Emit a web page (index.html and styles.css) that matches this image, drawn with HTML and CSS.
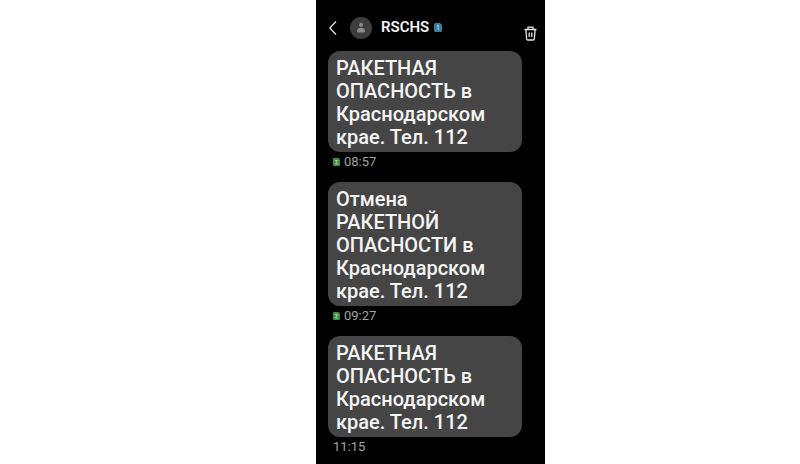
FILE: index.html
```html
<!DOCTYPE html>
<html lang="ru">
<head>
<meta charset="utf-8">
<meta name="viewport" content="width=device-width, initial-scale=1">
<title>RSCHS</title>
<link rel="stylesheet" href="styles.css">
</head>
<body>
<main class="phone">
  <header class="bar">
    <button class="icon-button" type="button" aria-label="Назад">
      <svg width="10" height="16" viewBox="0 0 10 16" fill="none" stroke="#e4e4e4" stroke-width="1.3"><path d="M8 1.500 1.800 8 8 14.500"/></svg>
    </button>
    <svg class="avatar" width="22" height="22" viewBox="0 0 22 22"><circle cx="11" cy="11" r="11" fill="#3e3e3e"/><circle cx="11" cy="7.800" r="2" fill="#8b8b8b"/><path d="M7 14.200c0-2.400 1.600-3.400 4-3.400s4 1 4 3.400c0 .8-.4 1.200-1.200 1.200H8.200c-.8 0-1.200-.4-1.200-1.200z" fill="#8b8b8b"/></svg>
    <h1 class="name">RSCHS</h1>
    <svg class="sim" width="8" height="9" viewBox="0 0 8 9"><path d="M1.500 0H6l2 2v5.500A1.500 1.500 0 0 1 6.500 9h-5A1.500 1.500 0 0 1 0 7.500v-6A1.500 1.500 0 0 1 1.500 0z" fill="#397d9f"/><path d="M3 3l1.200-.8V7" fill="none" stroke="#b5dceb"/></svg>
    <button class="icon-button trash" type="button" aria-label="Удалить">
      <svg width="13" height="15" viewBox="0 0 13 15" fill="none" stroke="#e8e8e8" stroke-width="1.3"><path d="M.5 3.500h12M4 3.300V1.200h5v2.100M1.900 3.500l.7 9.200c.1.900.5 1.300 1.300 1.300h5.200c.8 0 1.200-.4 1.300-1.300l.7-9.200M5.200 6.500v4.500M7.800 6.500v4.500"/></svg>
    </button>
  </header>
  <section class="messages">
    <article class="message">
      <p class="bubble">РАКЕТНАЯ<br>ОПАСНОСТЬ в<br>Краснодарском<br>крае. Тел. 112</p>
      <div class="meta"><svg width="7" height="8" viewBox="0 0 7 8"><path d="M1 0h4.500L7 1.500V7a1 1 0 0 1-1 1H1a1 1 0 0 1-1-1V1a1 1 0 0 1 1-1z" fill="#3f8f48"/><path d="M2 2.500h2.500L2.500 6H5" fill="none" stroke="#b5dfb6" stroke-width=".8"/></svg><time>08:57</time></div>
    </article>
    <article class="message">
      <p class="bubble">Отмена<br>РАКЕТНОЙ<br>ОПАСНОСТИ в<br>Краснодарском<br>крае. Тел. 112</p>
      <div class="meta"><svg width="7" height="8" viewBox="0 0 7 8"><path d="M1 0h4.500L7 1.500V7a1 1 0 0 1-1 1H1a1 1 0 0 1-1-1V1a1 1 0 0 1 1-1z" fill="#3f8f48"/><path d="M2 2.500h2.500L2.500 6H5" fill="none" stroke="#b5dfb6" stroke-width=".8"/></svg><time>09:27</time></div>
    </article>
    <article class="message">
      <p class="bubble">РАКЕТНАЯ<br>ОПАСНОСТЬ в<br>Краснодарском<br>крае. Тел. 112</p>
      <div class="meta"><time>11:15</time></div>
    </article>
  </section>
</main>
</body>
</html>
```
FILE: styles.css
```css
* {
  box-sizing: border-box;
}

body {
  margin: 0;
  min-height: 100vh;
  display: grid;
  grid-template-columns: 316fr 229fr 255fr;
  background: #fff;
  font-family: Roboto, "Noto Sans", sans-serif;
}

.phone {
  grid-column: 2;
  background: #000;
  color: #f4f4f4;
}

.bar {
  display: flex;
  align-items: center;
  padding: 11px 8px 7px 12px;
}

.icon-button {
  display: flex;
  padding: 0;
  border: 0;
  background: none;
}

.avatar {
  margin-left: 12px;
}

.name {
  margin: 0 5px 0 9px;
  font-size: 15px;
  line-height: 33px;
  font-weight: 600;
}

.trash {
  margin-left: auto;
  padding-top: 12px;
}

.messages {
  display: flex;
  flex-direction: column;
  gap: 10px;
  padding: 0 23px 0 12px;
}

.bubble {
  margin: 0;
  padding: 6px 8px 3px;
  border-radius: 12px;
  background: #454545;
  font-size: 20px;
  line-height: 23px;
  font-weight: 500;
}

.meta {
  display: flex;
  align-items: center;
  gap: 4px;
  padding-left: 5px;
  color: #a2a2a2;
  font-size: 13px;
  line-height: 20px;
}
```
